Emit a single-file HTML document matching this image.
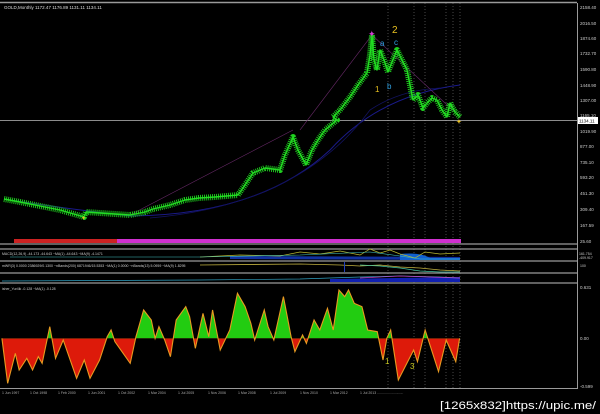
<!DOCTYPE html>
<html><head><meta charset="utf-8"><style>
html,body{margin:0;padding:0;background:#000;width:600px;height:414px;overflow:hidden}
svg{display:block}
text{font-family:"Liberation Sans",sans-serif}
</style></head><body>
<svg width="600" height="414" viewBox="0 0 600 414" xmlns="http://www.w3.org/2000/svg">
<defs>
<clipPath id="up"><rect x="0" y="0" width="1300" height="175"/></clipPath>
<clipPath id="dn"><rect x="0" y="175" width="1300" height="200"/></clipPath>
</defs>
<rect width="600" height="414" fill="#000"/>
<line x1="0" y1="2.5" x2="577" y2="2.5" stroke="#9a9a9a" stroke-width="1.5"/>
<line x1="577.5" y1="3" x2="577.5" y2="389" stroke="#9a9a9a"/>
<text x="4" y="9" font-size="4.5" fill="#ddd">GOLD,Monthly  1172.47 1176.89 1131.11 1134.11</text>
<g stroke="#777" stroke-width="0.6" stroke-dasharray="1,2">
<line x1="388" y1="3" x2="388" y2="389"/><line x1="414" y1="3" x2="414" y2="389"/>
<line x1="425" y1="3" x2="425" y2="389"/><line x1="446" y1="3" x2="446" y2="389"/>
<line x1="453" y1="3" x2="453" y2="389"/><line x1="460" y1="3" x2="460" y2="389"/>
</g>
<line x1="0" y1="120.5" x2="577" y2="120.5" stroke="#bbb" stroke-width="0.8"/>
<path d="M4 199 Q60 208 130 216 Q260 215 330 150 Q380 95 460 85" fill="none" stroke="#1a1a8a" stroke-width="1"/>
<path d="M150 218 Q300 205 370 110 Q400 90 440 88" fill="none" stroke="#12125e" stroke-width="0.8"/>
<path d="M130 215 L293 130 M300 130 L372 35 L460 117" fill="none" stroke="#6a2a6a" stroke-width="0.6"/>
<g fill="none" stroke-linejoin="round">
<polyline stroke="#1fcf1f" stroke-width="6" stroke-dasharray="0.9,1.1" points="4,199 20,202 40,206 60,210 84,217 86,212 100,213 130,215 145,212 153,209 170,205 185,200 199,198 215,197 238,195 245,185 253,173 265,168 280,170 285,155 293,137 298,150 306,165 312,150 318,140 325,130 337,120 333,117 340,110 350,97 358,85 367,73 370,55 372,35 374,60 377,70 380,50 384,60 388,72 392,62 397,50 402,60 407,70 410,85 413,100 418,95 423,108 427,103 432,98 437,100 442,110 447,117 450,103 455,112 460,117"/>
<polyline stroke="#22dd22" stroke-width="1.4" points="4,199 20,202 40,206 60,210 84,217 86,212 100,213 130,215 145,212 153,209 170,205 185,200 199,198 215,197 238,195 245,185 253,173 265,168 280,170 285,155 293,137 298,150 306,165 312,150 318,140 325,130 337,120 333,117 340,110 350,97 358,85 367,73 370,55 372,35 374,60 377,70 380,50 384,60 388,72 392,62 397,50 402,60 407,70 410,85 413,100 418,95 423,108 427,103 432,98 437,100 442,110 447,117 450,103 455,112 460,117"/>
</g>
<text x="368" y="37" font-size="9" fill="#d040d0">✦</text>
<text x="392" y="33" font-size="10" fill="#e8c020">2</text>
<text x="380" y="46" font-size="8" fill="#30a0e0">a</text>
<text x="394" y="45" font-size="8" fill="#30a0e0">c</text>
<text x="375" y="92" font-size="8" fill="#e8c020">1</text>
<text x="387" y="89" font-size="8" fill="#30a0e0">b</text>
<text x="456" y="124" font-size="7" fill="#e8c020">✦</text>
<text x="81" y="220" font-size="6" fill="#e8c020">✦</text>
<g font-size="4.5" fill="#ccc">
<text x="580" y="9">2158.40</text><text x="580" y="25">2016.50</text><text x="580" y="40">1874.60</text>
<text x="580" y="55">1732.70</text><text x="580" y="71">1590.80</text><text x="580" y="87">1448.90</text>
<text x="580" y="102">1307.00</text><text x="580" y="117">1165.10</text><text x="580" y="133">1019.90</text>
<text x="580" y="148">877.00</text><text x="580" y="164">735.10</text><text x="580" y="179">593.20</text>
<text x="580" y="195">451.30</text><text x="580" y="211">309.40</text><text x="580" y="227">167.59</text>
<text x="580" y="243">25.60</text>
</g>
<rect x="578" y="117" width="20" height="7" fill="#fff"/>
<text x="579" y="122.5" font-size="4.5" fill="#000">1134.11</text>
<rect x="14" y="239" width="103" height="4" fill="#cc2222"/>
<rect x="117" y="239" width="344" height="4" fill="#d030d0"/>
<g stroke="#9a9a9a" stroke-width="1.3">
<line x1="0" y1="244" x2="577" y2="244"/><line x1="0" y1="249" x2="577" y2="249"/>
<line x1="0" y1="261" x2="577" y2="261"/><line x1="0" y1="273" x2="577" y2="273"/>
<line x1="0" y1="283" x2="577" y2="283"/>
</g>
<path d="M230 256 L460 257 L460 260 L230 259 Z" fill="#1030a0"/>
<path d="M400 254 Q420 252 430 258 L460 258 L460 260 L400 260Z" fill="#1060d0"/>
<polyline fill="none" stroke="#b8b830" stroke-width="0.7" points="200,257 240,255 280,256 300,252 320,254 340,251 360,255 370,249 380,253 390,250 400,254 415,258 425,252 440,254 460,253"/>
<polyline fill="none" stroke="#40c0c0" stroke-width="0.6" points="10,257 200,257 300,255 370,252 400,256 420,259 460,259"/>
<text x="2" y="255" font-size="3.5" fill="#ccc">MACD(12,26,9) -44.173 -44.643 ~MA(1) -44.643 ~MA(9) -4.1471</text>
<text x="579" y="255" font-size="3.5" fill="#ccc">161.754</text>
<text x="579" y="259" font-size="3.5" fill="#ccc">-409.917</text>
<polyline fill="none" stroke="#c0b040" stroke-width="0.8" points="200,265 300,264 340,265 360,266 380,265 400,267 420,268 440,270 460,271"/>
<polyline fill="none" stroke="#40c0a0" stroke-width="0.8" points="360,265 380,266 400,268 420,271 440,272 460,272"/>
<rect x="344" y="262" width="1" height="10" fill="#2040c0"/>
<text x="2" y="267" font-size="3.5" fill="#ccc">mWR(3) 0.0000 2386929/0.1300 ~nBands(200) 6871946/15.5353 ~MA(1) 0.0000 ~nBands(13) 5.0959 ~MA(9) 1.8295</text>
<text x="580" y="267" font-size="3.5" fill="#ccc">100</text>
<path d="M330 279 L460 277 L460 282 L330 282Z" fill="#1020b0"/>
<polyline fill="none" stroke="#30a0c0" stroke-width="0.7" points="2,281 200,280 300,279 360,277 400,276 440,277 460,278"/>
<polyline fill="none" stroke="#c040c0" stroke-width="0.7" points="360,278 400,276 430,277 460,278"/>
<text x="2" y="290" font-size="3.5" fill="#ccc">isher_Yur4ik -0.128 ~MA(1) -0.128</text>
<g transform="translate(0,280) scale(0.383,0.3333)">
<path d="M5,175 L20,310 L40,220 L50,270 L70,235 L85,270 L100,230 L110,250 L130,140 L145,235 L165,180 L200,295 L220,240 L235,295 L260,240 L280,170 L290,150 L300,185 L340,250 L355,170 L375,90 L395,120 L405,175 L415,140 L430,180 L445,230 L460,120 L485,80 L495,110 L510,205 L530,100 L545,170 L555,90 L565,150 L575,210 L600,150 L620,40 L640,80 L655,130 L665,180 L690,90 L700,140 L715,180 L740,50 L760,170 L770,215 L790,165 L800,190 L820,120 L835,150 L855,85 L870,150 L885,30 L900,50 L910,30 L925,70 L945,80 L960,150 L985,155 L1000,240 L1010,175 L1020,150 L1040,300 L1080,210 L1090,245 L1110,150 L1145,275 L1165,180 L1190,245 L1200,175 Z" fill="#22cc11" clip-path="url(#up)"/>
<path d="M5,175 L20,310 L40,220 L50,270 L70,235 L85,270 L100,230 L110,250 L130,140 L145,235 L165,180 L200,295 L220,240 L235,295 L260,240 L280,170 L290,150 L300,185 L340,250 L355,170 L375,90 L395,120 L405,175 L415,140 L430,180 L445,230 L460,120 L485,80 L495,110 L510,205 L530,100 L545,170 L555,90 L565,150 L575,210 L600,150 L620,40 L640,80 L655,130 L665,180 L690,90 L700,140 L715,180 L740,50 L760,170 L770,215 L790,165 L800,190 L820,120 L835,150 L855,85 L870,150 L885,30 L900,50 L910,30 L925,70 L945,80 L960,150 L985,155 L1000,240 L1010,175 L1020,150 L1040,300 L1080,210 L1090,245 L1110,150 L1145,275 L1165,180 L1190,245 L1200,175 Z" fill="#dd1a0a" clip-path="url(#dn)"/>
<path d="M5,175 L20,310 L40,220 L50,270 L70,235 L85,270 L100,230 L110,250 L130,140 L145,235 L165,180 L200,295 L220,240 L235,295 L260,240 L280,170 L290,150 L300,185 L340,250 L355,170 L375,90 L395,120 L405,175 L415,140 L430,180 L445,230 L460,120 L485,80 L495,110 L510,205 L530,100 L545,170 L555,90 L565,150 L575,210 L600,150 L620,40 L640,80 L655,130 L665,180 L690,90 L700,140 L715,180 L740,50 L760,170 L770,215 L790,165 L800,190 L820,120 L835,150 L855,85 L870,150 L885,30 L900,50 L910,30 L925,70 L945,80 L960,150 L985,155 L1000,240 L1010,175 L1020,150 L1040,300 L1080,210 L1090,245 L1110,150 L1145,275 L1165,180 L1190,245 L1200,175" fill="none" stroke="#e89a20" stroke-width="1.1" vector-effect="non-scaling-stroke"/>
</g>
<text x="385" y="364" font-size="8" fill="#c8c820">1</text>
<text x="410" y="369" font-size="8" fill="#c8c820">3</text>
<g font-size="4.5" fill="#ccc"><text x="580" y="289">0.631</text><text x="580" y="340">0.00</text><text x="580" y="388">-0.599</text></g>
<line x1="0" y1="388.5" x2="577" y2="388.5" stroke="#9a9a9a" stroke-width="1"/>
<g font-size="3.5" fill="#aaa">
<text x="2" y="394">1 Jun 1997</text><text x="30" y="394">1 Oct 1998</text><text x="58" y="394">1 Feb 2000</text><text x="88" y="394">1 Jun 2001</text><text x="118" y="394">1 Oct 2002</text><text x="148" y="394">1 Mar 2004</text><text x="178" y="394">1 Jul 2005</text><text x="208" y="394">1 Nov 2006</text><text x="238" y="394">1 Mar 2008</text><text x="270" y="394">1 Jul 2009</text><text x="300" y="394">1 Nov 2010</text><text x="330" y="394">1 Mar 2012</text><text x="360" y="394">1 Jul 2013 ...........................</text>
</g>
<text x="440" y="409" font-size="11" fill="#fff" font-family="Liberation Mono, monospace" textLength="156" lengthAdjust="spacingAndGlyphs">[1265x832]https://upic.me/</text>
</svg>
</body></html>
